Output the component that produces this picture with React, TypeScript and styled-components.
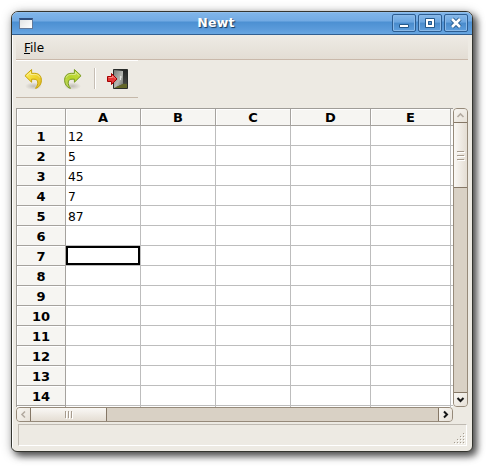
import React from "react";
import styled, { createGlobalStyle, css } from "styled-components";

const GlobalStyle = createGlobalStyle`
  * { box-sizing: border-box; }
  html, body { margin: 0; background: #fff; }
  body { font-family: "DejaVu Sans", sans-serif; font-size: 12px; color: #000; overflow: hidden; }
`;

const Desktop = styled.div`
  width: 492px;
  height: 471px;
  padding: 11px 19px 19px 11px;
`;

const WindowFrame = styled.main`
  width: 462px;
  height: 441px;
  border: 1px solid #34352f;
  border-radius: 7px 7px 6px 6px;
  background: #edeae3;
  display: flex;
  flex-direction: column;
  overflow: hidden;
  box-shadow: 4px 4px 7px rgba(0, 0, 0, 0.6), 1px 2px 11px rgba(0, 0, 0, 0.35);
`;

const TitleBar = styled.header`
  height: 23px;
  flex: none;
  display: grid;
  grid-template-columns: 28px 1fr 80px;
  align-items: center;
  border-bottom: 1px solid #315f91;
  background: linear-gradient(#a0c8f0 0, #80b5e9 1px, #72aae3 9px, #4c90d2 10px, #5a9ada 17px, #68a6e1 22px);
`;

const Title = styled.h1`
  margin: 0;
  text-align: center;
  font-size: 12.5px;
  line-height: 22px;
  letter-spacing: 0.3px;
  color: #fff;
  text-shadow: 1px 1px 1px #16395e;
`;

const AppIcon = styled.div`
  width: 14px;
  height: 11px;
  margin: 1px 0 0 7px;
  border: 1px solid #647a9a;
  border-top: 2px solid #304f7e;
  background: linear-gradient(135deg, #e2e4e5, #fff);
`;

const WindowButtons = styled.div`
  display: flex;
  gap: 2px;
`;

const WindowButton = styled.button`
  width: 24px;
  height: 18px;
  padding: 0;
  border: 1px solid #2c5d91;
  border-radius: 2px;
  background: linear-gradient(#86b9ea, #6ba5df 45%, #488bcc 50%, #5f9fdd);
  box-shadow: inset 0 0 0 1px #8ab9e8;
  svg { display: block; }
`;

const Body = styled.div`
  flex: 1;
  min-height: 0;
  display: flex;
  flex-direction: column;
  padding: 0 4px 4px 3px;
  border-left: 1px solid #fff;
`;

const MenuBar = styled.nav`
  height: 25px;
  flex: none;
  padding-left: 8px;
  line-height: 26px;
  border-bottom: 1px solid #c9b8aa;
  background: linear-gradient(#eeebe5, #e3ddd4);
`;

const ToolBar = styled.div`
  width: 122px;
  height: 38px;
  flex: none;
  display: flex;
  align-items: center;
  border-top: 1px solid #fff;
  border-bottom: 1px solid #c5b8a9;
`;

const ToolButton = styled.button<{ $width: number }>`
  width: ${(p) => p.$width}px;
  height: 30px;
  padding: 0;
  border: 0;
  background: none;
  display: flex;
  justify-content: center;
  align-items: center;
`;

const Separator = styled.div`
  width: 2px;
  height: 21px;
  margin-bottom: 1px;
  border-left: 1px solid #c6beb4;
  border-right: 1px solid #fff;
`;

const SheetArea = styled.div`
  display: grid;
  grid-template-columns: 437px 15px;
  grid-template-rows: 299px 15px;
  margin-top: 10px;
`;

const Sheet = styled.div`
  overflow: hidden;
  background: #fff;
  border-top: 1px solid #a09d98;
  border-left: 1px solid #a09d98;
`;

const SheetRow = styled.div<{ $head?: boolean }>`
  display: grid;
  grid-template-columns: 49px 75px 75px 75px 80px 80px 2px;
  grid-template-rows: 100%;
  height: ${(p) => (p.$head ? 17 : 20)}px;
`;

const HeaderCell = styled.div<{ $row?: boolean }>`
  min-width: 0;
  border-right: 1px solid #a5a29e;
  border-bottom: 1px solid #a5a29e;
  background: #f6f5f2;
  box-shadow: inset 1px 1px 0 #fff;
  font-size: 13px;
  font-weight: bold;
  text-align: center;
  line-height: ${(p) => (p.$row ? 22 : 18)}px;
`;

const EdgeCell = styled.div<{ $head?: boolean }>`
  border-bottom: 1px solid ${(p) => (p.$head ? "#a5a29e" : "#bdbdbd")};
  background: ${(p) => (p.$head ? "#f6f5f2" : "#fff")};
`;

const Cell = styled.div<{ $active?: boolean }>`
  border-right: 1px solid #bdbdbd;
  border-bottom: 1px solid #bdbdbd;
  padding-left: 2px;
  font-size: 12.3px;
  line-height: 22px;
  ${(p) => p.$active && css`box-shadow: inset 0 0 0 2px #000;`}
`;

const ScrollBar = styled.div<{ $vertical?: boolean }>`
  display: flex;
  flex-direction: ${(p) => (p.$vertical ? "column" : "row")};
  background: #d9d1c5;
  border: 1px solid #968a7a;
  border-radius: 4px;
  overflow: hidden;
`;

const ScrollArrow = styled.div<{ $start?: boolean; $vertical?: boolean }>`
  flex: none;
  width: ${(p) => (p.$vertical ? 13 : p.$start ? 13 : 14)}px;
  height: ${(p) => (p.$vertical ? (p.$start ? 13 : 14) : 13)}px;
  background: linear-gradient(135deg, #f8f6f2, #e7e1d8);
  ${(p) => !p.$start && (p.$vertical ? css`border-top: 1px solid #857766;` : css`border-left: 1px solid #857766;`)}
  svg { display: block; }
`;

const Thumb = styled.div<{ $vertical?: boolean }>`
  flex: none;
  display: flex;
  align-items: center;
  justify-content: center;
  ${(p) => p.$vertical
    ? css`height: 66px; border-top: 1px solid #857766; border-bottom: 1px solid #857766; background: linear-gradient(90deg, #faf8f5, #e4ddd3);`
    : css`width: 77px; border-left: 1px solid #857766; border-right: 1px solid #857766; background: linear-gradient(#faf8f5, #e4ddd3);`}
`;

const Grip = styled.div<{ $vertical?: boolean }>`
  display: grid;
  ${(p) => (p.$vertical
    ? css`grid-template-rows: repeat(3, 1px); width: 7px; gap: 3px;`
    : css`grid-template-columns: repeat(3, 1px); height: 7px; gap: 2px;`)}
  i { background: #a69b8d; box-shadow: 1px 1px 0 #fff; }
`;

const Spacer = styled.div`
  flex: 1;
`;

const StatusBar = styled.footer`
  height: 22px;
  margin: 2px 1px 0 2px;
  border: 1px solid #bfbab2;
  border-right-color: #fff;
  border-bottom-color: #fff;
  display: flex;
  justify-content: flex-end;
  align-items: flex-end;
`;

function Arrow({ d, disabled }: { d: string; disabled?: boolean }) {
  return (
    <svg width="13" height="13" viewBox="0 0 13 13">
      <path d={d} fill="none" stroke={disabled ? "#b3aaa0" : "#171717"} strokeWidth={disabled ? 1.6 : 2} />
    </svg>
  );
}

function TurnArrow({ redo }: { redo?: boolean }) {
  const id = redo ? "redo-fill" : "undo-fill";
  return (
    <svg width="19" height="23" viewBox="0 0 20 24">
      <defs>
        <linearGradient id={id} x1="0" y1="0" x2="1" y2="1">
          <stop offset="0" stopColor={redo ? "#c9df45" : "#fff16b"} />
          <stop offset=".55" stopColor={redo ? "#b5d42a" : "#efd32a"} />
          <stop offset="1" stopColor={redo ? "#c4d66d" : "#dcb638"} />
        </linearGradient>
        <radialGradient id={`${id}-shade`}>
          <stop stopColor="#8b877e" stopOpacity=".45" />
          <stop offset="1" stopColor="#8b877e" stopOpacity="0" />
        </radialGradient>
      </defs>
      <ellipse cx="10" cy="19" rx="9" ry="4" fill={`url(#${id}-shade)`} />
      <g transform={redo ? "translate(20 0) scale(-1 1)" : undefined}>
        <path
          d="M1 8 8 1.5V5.5h3.2c4.7 0 7.3 3.1 7.1 7.8-.1 3.4-2 6.2-4.8 7.7l-1.4.3c1.8-2.3 2.7-4.6 2.3-6.8-.4-2-1.8-2.9-4-2.8H8v3.2Z"
          fill={`url(#${id})`}
          stroke={redo ? "#71951d" : "#c4a000"}
          strokeLinejoin="round"
        />
        <path d="m3 7.8 4-3.5V6.7h4.2c2.8 0 4.7 1.2 5.5 3.3" fill="none" stroke="#fff" strokeOpacity=".45" />
      </g>
    </svg>
  );
}

function DoorIcon() {
  return (
    <svg width="24" height="24" viewBox="0 0 24 24">
      <defs>
        <linearGradient id="door" x2="1" y2="1">
          <stop stopColor="#777b76" /><stop offset=".55" stopColor="#b6b8b3" /><stop offset="1" stopColor="#636661" />
        </linearGradient>
        <linearGradient id="opening" x2="0" y2="1">
          <stop stopColor="#242625" /><stop offset=".7" stopColor="#414340" /><stop offset="1" stopColor="#747a2c" />
        </linearGradient>
      </defs>
      <path d="M8.5 2.5h14v19h-14Z" fill="url(#opening)" stroke="#292c2a" />
      <path d="m9 3 9 1v13l-9 4Z" fill="url(#door)" />
      <path d="m10 20.5 8-3.5h4v4Z" fill="#626629" />
      <path d="M15.5 9v4M15 10h2" stroke="#e1e3df" fill="none" />
      <path d="M2.5 9.5h4v-3l5.5 5.5-5.5 5.5v-3h-4Z" fill="#e43535" stroke="#a40000" strokeLinejoin="round" />
      <path d="M3.5 10.5h4V9l3 2.7" stroke="#ff8a82" fill="none" />
    </svg>
  );
}

function SizeGrip() {
  return (
    <svg width="12" height="12" viewBox="0 0 12 12">
      {[0, 1, 2, 3].map((row) =>
        Array.from({ length: row + 1 }, (_, col) => (
          <g key={`${row}-${col}`}>
            <rect x={9 - col * 3} y={row * 3} width="1" height="1" fill="#a59c90" />
            <rect x={10 - col * 3} y={1 + row * 3} width="1" height="1" fill="#fff" />
          </g>
        )),
      )}
    </svg>
  );
}

const values = ["12", "5", "45", "7", "87"];
const columns = ["A", "B", "C", "D", "E"];

export default function App() {
  return (
    <>
      <GlobalStyle />
      <Desktop>
        <WindowFrame>
          <TitleBar>
            <AppIcon />
            <Title>Newt</Title>
            <WindowButtons>
              <WindowButton aria-label="Minimize">
                <svg width="22" height="16"><path d="M6.5 9.5h9v3h-9Z" fill="#fff" stroke="#23588b" /></svg>
              </WindowButton>
              <WindowButton aria-label="Maximize">
                <svg width="22" height="16" fill="none">
                  <path d="M6.5 3.5h9v9h-9Z" stroke="#23588b" />
                  <path d="M8 5h6v6H8Z" stroke="#fff" strokeWidth="2" />
                  <path d="M9.5 6.5h3v3h-3Z" stroke="#23588b" />
                </svg>
              </WindowButton>
              <WindowButton aria-label="Close">
                <svg width="22" height="16" fill="none">
                  <path d="m7 4 8 8m0-8-8 8" stroke="#23588b" strokeWidth="4.5" />
                  <path d="m7 4 8 8m0-8-8 8" stroke="#fff" strokeWidth="2.6" />
                </svg>
              </WindowButton>
            </WindowButtons>
          </TitleBar>
          <Body>
            <MenuBar><u>F</u>ile</MenuBar>
            <ToolBar>
              <ToolButton $width={35} aria-label="Undo"><TurnArrow /></ToolButton>
              <ToolButton $width={43} aria-label="Redo"><TurnArrow redo /></ToolButton>
              <Separator />
              <ToolButton $width={42} aria-label="Quit"><DoorIcon /></ToolButton>
            </ToolBar>
            <SheetArea>
              <Sheet>
                <SheetRow $head>
                  <HeaderCell />
                  {columns.map((name) => <HeaderCell key={name}>{name}</HeaderCell>)}
                  <EdgeCell $head />
                </SheetRow>
                {Array.from({ length: 15 }, (_, row) => (
                  <SheetRow key={row}>
                    <HeaderCell $row>{row < 14 ? row + 1 : ""}</HeaderCell>
                    {columns.map((name, col) => (
                      <Cell key={name} $active={row === 6 && col === 0}>{col === 0 ? values[row] : ""}</Cell>
                    ))}
                    <EdgeCell />
                  </SheetRow>
                ))}
              </Sheet>
              <ScrollBar $vertical>
                <ScrollArrow $vertical $start><Arrow d="m3.5 8 3-3 3 3" disabled /></ScrollArrow>
                <Thumb $vertical><Grip $vertical><i /><i /><i /></Grip></Thumb>
                <Spacer />
                <ScrollArrow $vertical><Arrow d="m3.5 5 3 3 3-3" /></ScrollArrow>
              </ScrollBar>
              <ScrollBar>
                <ScrollArrow $start><Arrow d="m8 3.5-3 3 3 3" disabled /></ScrollArrow>
                <Thumb><Grip><i /><i /><i /></Grip></Thumb>
                <Spacer />
                <ScrollArrow><Arrow d="m5 3.5 3 3-3 3" /></ScrollArrow>
              </ScrollBar>
            </SheetArea>
            <StatusBar><SizeGrip /></StatusBar>
          </Body>
        </WindowFrame>
      </Desktop>
    </>
  );
}
